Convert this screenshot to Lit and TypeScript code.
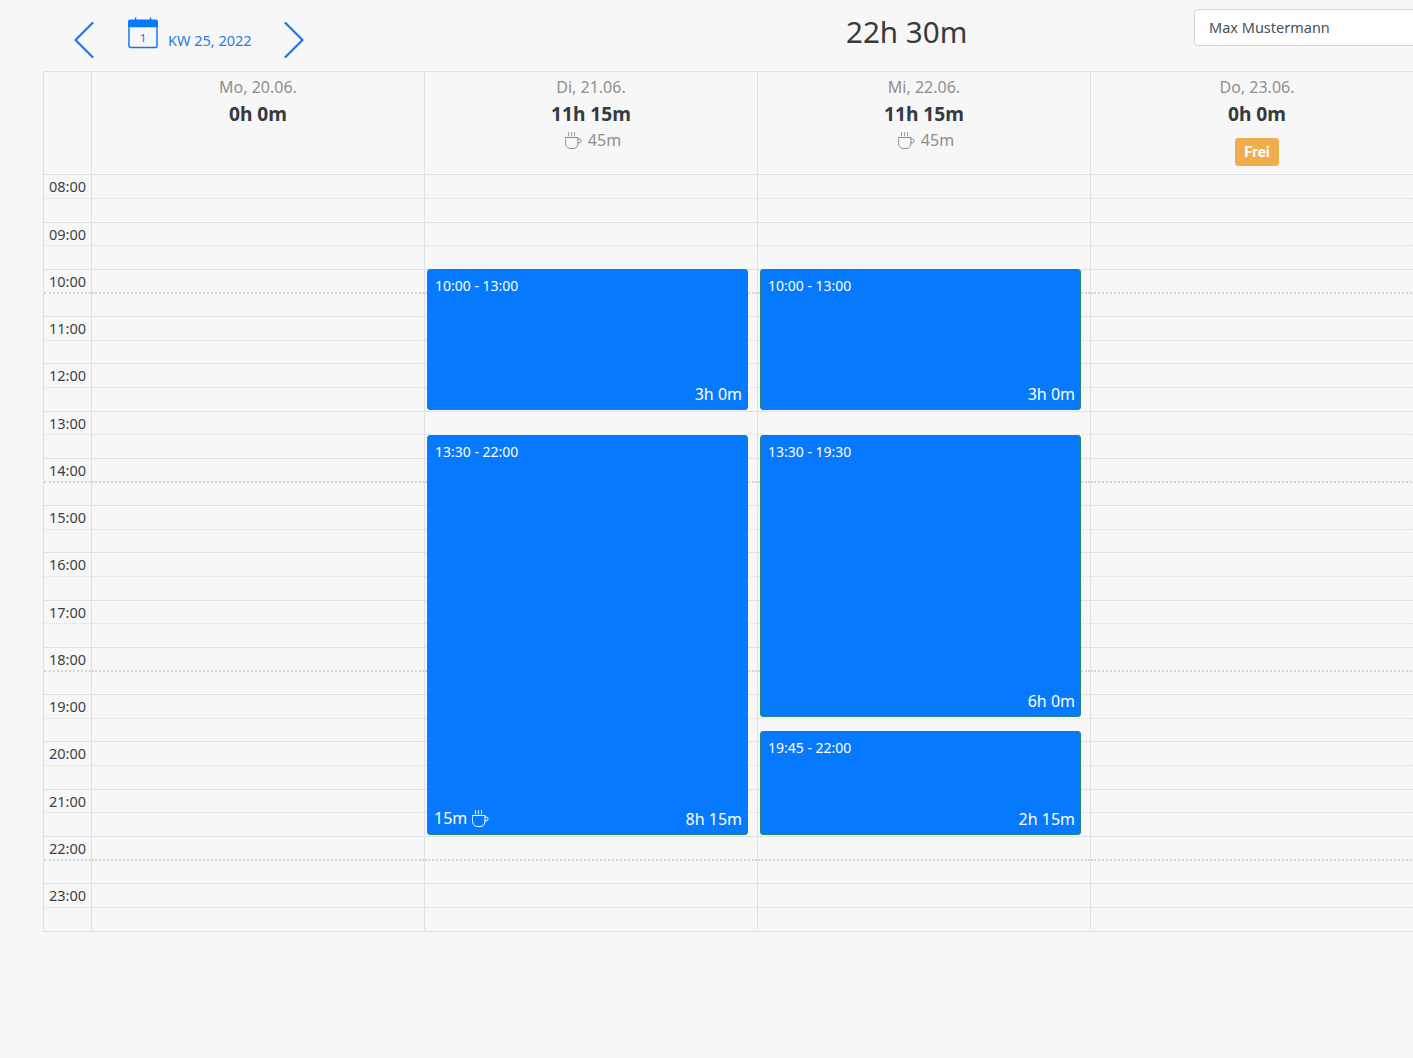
import { LitElement, html, css, svg } from "lit";
import { customElement } from "lit/decorators.js";

const cup = () => svg`<svg class="cup" width="17" height="17" viewBox="0 0 17 17" fill="none" stroke="currentColor" stroke-width="1" stroke-linecap="round">
  <path d="M.5 5.500h12.500v5.500a5.500 5.500 0 0 1-4 5.500H4.500a5.500 5.500 0 0 1-4-5.500z"/>
  <path d="M13 7h1.200a1.900 1.900 0 0 1 0 3.800H12.700"/>
  <path d="M3.500.5c-.8 1 .8 2 0 3.500M6.500.5c-.8 1 .8 2 0 3.500M9.500.5c-.8 1 .8 2 0 3.500"/>
</svg>`;

interface Ev { top: number; h: number; range: string; dur: string; brk?: string; }
interface Day { label: string; total: string; brk?: string; free?: boolean; events: Ev[]; }

const days: Day[] = [
  { label: "Mo, 20.06.", total: "0h 0m", events: [] },
  { label: "Di, 21.06.", total: "11h 15m", brk: "45m", events: [
    { top: 94.75, h: 141, range: "10:00 - 13:00", dur: "3h 0m" },
    { top: 260.75, h: 400, range: "13:30 - 22:00", dur: "8h 15m", brk: "15m" },
  ] },
  { label: "Mi, 22.06.", total: "11h 15m", brk: "45m", events: [
    { top: 94.75, h: 141, range: "10:00 - 13:00", dur: "3h 0m" },
    { top: 260.75, h: 282, range: "13:30 - 19:30", dur: "6h 0m" },
    { top: 556.75, h: 104, range: "19:45 - 22:00", dur: "2h 15m" },
  ] },
  { label: "Do, 23.06.", total: "0h 0m", free: true, events: [] },
];
const hours = Array.from({ length: 16 }, (_, i) => i + 8);
const pad = (n: number) => String(n).padStart(2, "0") + ":00";

@customElement("app-root")
export class AppRoot extends LitElement {
  static styles = css`
    :host { display: block; width: 1413px; height: 1058px; overflow: hidden; background: #f7f7f7;
      font-family: "Noto Sans", "Open Sans", sans-serif; color: #343a40; }
    .top { display: flex; height: 71px; position: relative; padding-left: 74px; box-sizing: border-box; }
    .chev { color: #1f76e6; margin-top: 22px; display: block; }
    .week { display: flex; align-items: flex-start; margin-left: 34px; width: 156px; color: #2a7be4; }
    .week svg { margin-top: 17px; display: block; }
    .week span { margin: 30px 0 0 10px; font-size: 14.5px; line-height: 20px; white-space: nowrap; }
    .sum { position: absolute; left: 846px; top: 11px; font-size: 29.6px; line-height: 42px; color: #3a3a3a; white-space: nowrap; }
    .select { position: absolute; left: 1194px; top: 9px; width: 260px; height: 37px; box-sizing: border-box;
      background: #fff; border: 1px solid #ced4da; border-radius: 4px; padding-left: 14px; font-size: 14.5px; line-height: 35px; color: #495057; }
    .grid { margin-left: 43px; display: grid; grid-template-columns: 47px repeat(4, 333px); width: 1380px;
      border-top: 1px solid #dee2e6; border-left: 1px solid #dee2e6; border-bottom: 1px solid #dee2e6; padding-bottom: 0.5px; }
    .head { height: 102.25px; box-sizing: border-box; border-left: 1px solid #dee2e6; text-align: center; padding-top: 4px; }
    .head.first { border-left: 0; }
    .date { font-size: 16px; line-height: 22px; color: #8f8f8f; }
    .total { font-size: 19.2px; line-height: 27px; font-weight: 700; color: #343a40; margin-top: 2px; }
    .brk { font-size: 16px; line-height: 24px; color: #8f8f8f; display: flex; justify-content: center; align-items: center; gap: 6px; margin-top: 1px; padding-left: 4px; }
    .badge { display: inline-block; background: #f0ad4e; color: #fff; font-size: 15px; font-weight: 700; line-height: 28px; height: 28px; padding: 0 9.5px; border-radius: 3px; margin-top: 11px; font-family: "Roboto", sans-serif; }
    .col { position: relative; border-left: 1px solid #dee2e6; }
    .col.first { border-left: 0; }
    .hour { height: 47.25px; box-sizing: border-box; border-top: 1px solid #dee2e6; position: relative; }
    .half { height: 23.625px; box-sizing: border-box; border-bottom: 1px dotted #dedede; }
    .half.strong { height: 24.625px; border-bottom: 2px dotted #d5d5d5; }
    .time { position: absolute; left: 5px; top: 1px; font-size: 14.5px; line-height: 21px; color: #3c4248; }
    .ev { position: absolute; left: 2px; width: 321px; box-sizing: border-box; background: #0779ff; border: 1px solid #1f8a70; border-radius: 3px; color: #fff; }
    .range { position: absolute; left: 7px; top: 5px; font-size: 14px; line-height: 21px; white-space: nowrap; }
    .dur { position: absolute; right: 5px; bottom: 4.5px; font-size: 16px; line-height: 22px; white-space: nowrap; }
    .ebrk { position: absolute; left: 6px; bottom: 5px; font-size: 16px; line-height: 22px; display: flex; align-items: center; gap: 5px; }
    .cup { display: block; }
  `;

  render() {
    const lines = (withTime: boolean) => hours.map((h, i) => html`<div class="hour">
      <div class="half ${i % 4 === 2 ? "strong" : ""}"></div>
      ${withTime ? html`<div class="time">${pad(h)}</div>` : ""}
    </div>`);
    return html`
      <div class="top">
        <svg class="chev" width="20" height="36" viewBox="0 0 20 36" fill="none" stroke="currentColor" stroke-width="2.200" stroke-linecap="round" stroke-linejoin="round"><path d="M18.500 1 1.500 18 18.500 35"/></svg>
        <div class="week">
          <svg width="30" height="32" viewBox="0 0 31 32"><path d="M7 0h1.500v3H7zM22.500 0H24v3h-1.500z" fill="#0779ff"/><path d="M2 2h27a2 2 0 0 1 2 2v6H0V4a2 2 0 0 1 2-2z" fill="#0779ff"/><path d="M1 9v20a2 2 0 0 0 2 2h25a2 2 0 0 0 2-2V9" fill="none" stroke="#0779ff" stroke-width="1.500"/><text x="15.500" y="25" text-anchor="middle" font-size="12" fill="#2a6fc4" font-family="Noto Sans, sans-serif">1</text></svg>
          <span>KW 25, 2022</span>
        </div>
        <svg class="chev" width="20" height="36" viewBox="0 0 20 36" fill="none" stroke="currentColor" stroke-width="2.200" stroke-linecap="round" stroke-linejoin="round"><path d="M1.500 1 18.500 18 1.500 35"/></svg>
        <div class="sum">22h 30m</div>
        <div class="select">Max Mustermann</div>
      </div>
      <div class="grid">
        <div class="head first"></div>
        ${days.map((d) => html`<div class="head">
          <div class="date">${d.label}</div>
          <div class="total">${d.total}</div>
          ${d.brk ? html`<div class="brk">${cup()}<span>${d.brk}</span></div>` : ""}
          ${d.free ? html`<div class="badge">Frei</div>` : ""}
        </div>`)}
        <div class="col first">${lines(true)}</div>
        ${days.map((d) => html`<div class="col">
          ${lines(false)}
          ${d.events.map((e) => html`<div class="ev" style="top:${e.top}px;height:${e.h}px">
            <div class="range">${e.range}</div>
            ${e.brk ? html`<div class="ebrk"><span>${e.brk}</span>${cup()}</div>` : ""}
            <div class="dur">${e.dur}</div>
          </div>`)}
        </div>`)}
      </div>
    `;
  }
}
